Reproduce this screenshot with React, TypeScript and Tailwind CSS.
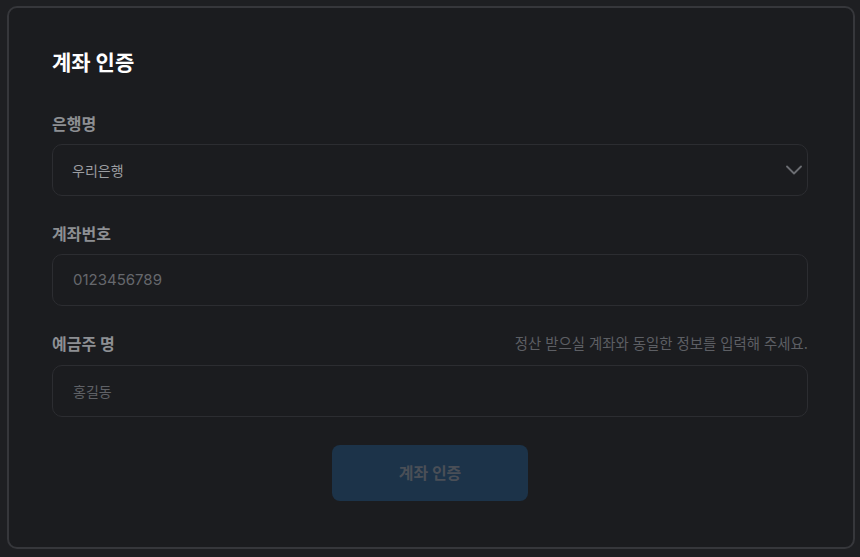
const font = "font-['Inter','Noto_Sans_CJK_KR',sans-serif]";

export default function App() {
  return (
    <div className={`min-h-[557px] bg-[#1e1f22] pl-[7px] pr-[5px] pt-[6px] pb-[8px] ${font}`}>
      <div className="rounded-[10px] border-2 border-[#36373b] bg-[#1b1c1f] pl-[43px] pr-[45px] pt-[41px] pb-[46px]">
        <h1 className="text-[21px] leading-[28px] font-bold text-white">계좌 인증</h1>

        <div className="mt-[35px]">
          <label className="block text-[16px] leading-[24px] font-bold text-[#8d8f93]">은행명</label>
          <div className="mt-[8px] flex h-[52px] items-center justify-between rounded-[10px] border border-[#2c2d31] bg-[#1b1c1f] pl-[19px] pr-[5px]">
            <span className="text-[14px] text-[#9b9da1]">우리은행</span>
            <svg width="16" height="10" viewBox="0 0 16 10" fill="none">
              <path d="M1 1.5l7 7 7-7" stroke="#6b6d72" strokeWidth="1.8" strokeLinecap="round" strokeLinejoin="round" />
            </svg>
          </div>
        </div>

        <div className="mt-[26px]">
          <label className="block text-[16px] leading-[24px] font-bold text-[#8d8f93]">계좌번호</label>
          <div className="mt-[8px] flex h-[52px] items-center rounded-[10px] border border-[#2c2d31] bg-[#1b1c1f] pl-[20px]">
            <span className="text-[15px] text-[#66686d]">0123456789</span>
          </div>
        </div>

        <div className="mt-[26px]">
          <div className="flex items-center justify-between">
            <label className="block text-[16px] leading-[24px] font-bold text-[#8d8f93]">예금주 명</label>
            <span className="text-[14.4px] text-[#5d5f64]">정산 받으실 계좌와 동일한 정보를 입력해 주세요.</span>
          </div>
          <div className="mt-[9px] flex h-[52px] items-center rounded-[10px] border border-[#2c2d31] bg-[#1b1c1f] pl-[20px]">
            <span className="text-[14px] text-[#5f6166]">홍길동</span>
          </div>
        </div>

        <div className="mt-[28px] flex justify-center">
          <button className="h-[56px] w-[196px] rounded-[8px] bg-[#1c3349] text-[16px] font-bold text-[#4a4f57]">
            계좌 인증
          </button>
        </div>
      </div>
    </div>
  );
}
